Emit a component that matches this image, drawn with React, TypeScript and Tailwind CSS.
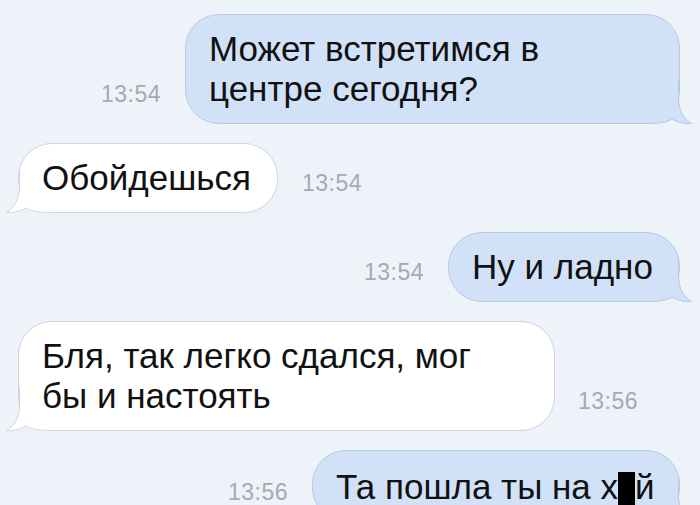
import React from "react";

type Side = "in" | "out";

function Tail({ side }: { side: Side }) {
  const fill = side === "out" ? "#d1e2f8" : "#ffffff";
  const stroke = side === "out" ? "#b8cae2" : "#cfd5de";
  return (
    <svg
      width="48"
      height="44"
      viewBox="0 0 48 44"
      className={
        side === "out"
          ? "absolute right-[-13px] bottom-[-1px]"
          : "absolute left-[-13px] bottom-[-1px] -scale-x-100"
      }
    >
      <path
        d="M0 0 H35 V18 C35 31 40 39 47.5 43.5 C40 44.5 33 42.5 28 39.5 C23 42.5 17 44 0 44 Z"
        fill={fill}
      />
      <path
        d="M34.5 0 V18 C34.5 31 40 39 47.5 43.5 C40 44 33 42 28 39 C23 42 17 43.5 0 43.5"
        fill="none"
        stroke={stroke}
        strokeWidth="1"
      />
    </svg>
  );
}

function Bubble({
  side,
  width,
  children,
}: {
  side: Side;
  width: string;
  children: React.ReactNode;
}) {
  const tone =
    side === "out"
      ? "bg-[#d1e2f8] border-[#b8cae2]"
      : "bg-white border-[#cfd5de]";
  return (
    <div
      className={`relative shrink-0 rounded-[34px] border ${tone} ${width} pl-[23px] pr-[20px] py-[14px]`}
    >
      <Tail side={side} />
      <p className="relative whitespace-nowrap text-[35px] leading-[40px] text-[#111111] font-['Liberation_Sans',Arial,sans-serif]">
        {children}
      </p>
    </div>
  );
}

function Time({ children }: { children: React.ReactNode }) {
  return (
    <span className="mb-[18px] text-[23px] leading-none tracking-[0.5px] text-[#a5aab2] font-['Liberation_Sans',Arial,sans-serif]">
      {children}
    </span>
  );
}

export default function App() {
  return (
    <div className="h-[505px] w-[700px] overflow-hidden bg-[#eef2f9]">
      <div className="flex flex-col gap-[19px] pl-[18px] pr-[20px] pt-[14px]">
        <div className="flex items-end justify-end gap-[24px]">
          <Time>13:54</Time>
          <Bubble side="out" width="w-[495px]">
            Может встретимся в<br />
            центре сегодня?
          </Bubble>
        </div>

        <div className="flex items-end justify-start gap-[24px]">
          <Bubble side="in" width="w-[260px]">
            Обойдешься
          </Bubble>
          <Time>13:54</Time>
        </div>

        <div className="flex items-end justify-end gap-[24px]">
          <Time>13:54</Time>
          <Bubble side="out" width="w-[232px]">
            Ну и ладно
          </Bubble>
        </div>

        <div className="flex items-end justify-start gap-[23px]">
          <Bubble side="in" width="w-[537px]">
            Бля, так легко сдался, мог
            <br />
            бы и настоять
          </Bubble>
          <Time>13:56</Time>
        </div>

        <div className="flex items-end justify-end gap-[24px]">
          <Time>13:56</Time>
          <Bubble side="out" width="w-[368px]">
            Та пошла ты на х
            <span className="inline-block h-[34px] w-[17px] translate-y-[7px] bg-black" />
            й
          </Bubble>
        </div>
      </div>
    </div>
  );
}
